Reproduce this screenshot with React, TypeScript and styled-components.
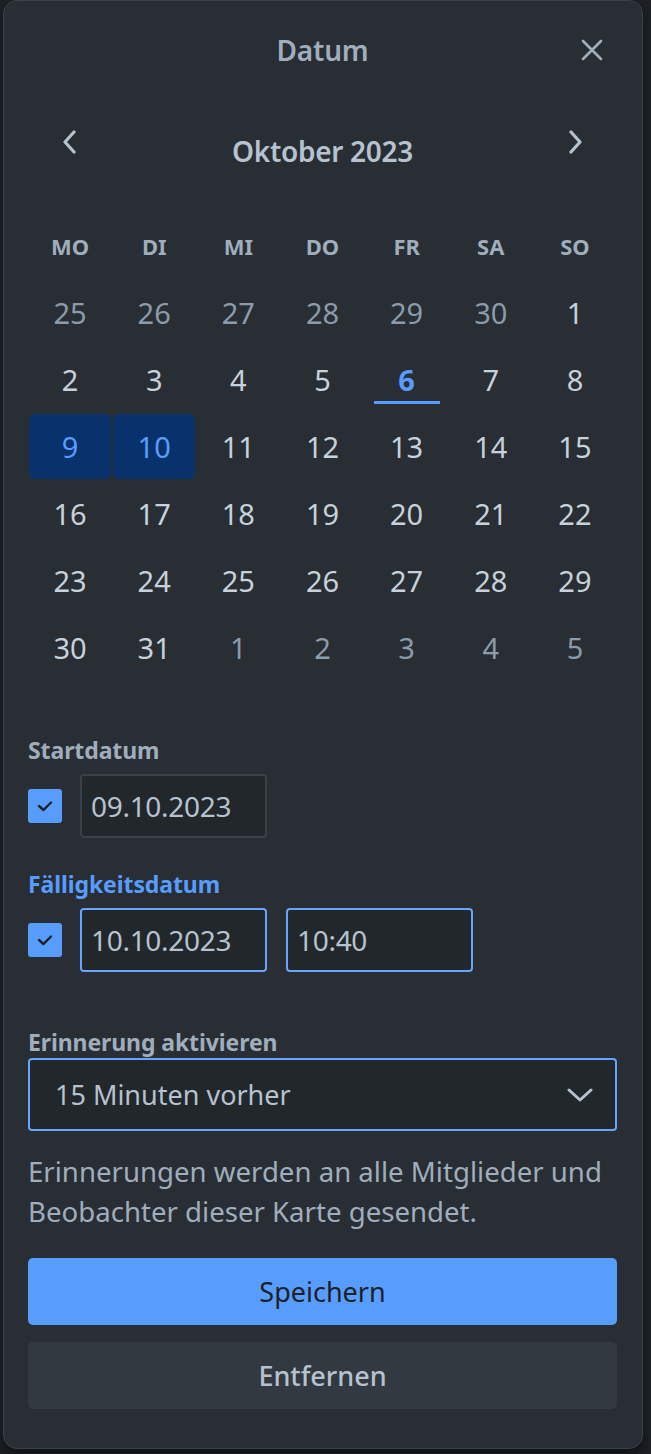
import React from "react";
import styled, { createGlobalStyle } from "styled-components";

const GlobalStyle = createGlobalStyle`
  html, body {
    margin: 0;
    padding: 0;
    background: #1d2125;
  }
  body {
    font-family: "Noto Sans", "Open Sans", sans-serif;
    color: #b6c2cf;
  }
  * { box-sizing: border-box; }
`;

const Page = styled.div`
  padding: 0 0 0 3px;
  min-height: 1454px;
`;

const Card = styled.section`
  width: 640px;
  background: #282e33;
  border: 1px solid #3a424a;
  border-radius: 14px;
  padding: 0 25px 39px 24px;
  box-shadow: 0 8px 14px rgba(0, 0, 0, 0.45);
  display: flex;
  flex-direction: column;
`;

const Header = styled.header`
  height: 98px;
  display: grid;
  grid-template-columns: 50px 1fr 50px;
  align-items: center;
`;

const Title = styled.h2`
  grid-column: 2;
  margin: 0;
  text-align: center;
  font-size: 28px;
  font-weight: 600;
  color: #9fadbc;
  letter-spacing: -0.2px;
`;

const IconButton = styled.button`
  width: 44px;
  height: 44px;
  padding: 0;
  border: 0;
  background: transparent;
  color: #9fadbc;
  display: flex;
  align-items: center;
  justify-content: center;
  justify-self: center;
  cursor: pointer;
`;

const MonthNav = styled.div`
  height: 86px;
  display: grid;
  grid-template-columns: 44px 1fr 44px;
  align-items: center;
  padding: 0 20px;
`;

const MonthTitle = styled.div`
  text-align: center;
  padding-top: 18px;
  font-size: 28px;
  font-weight: 600;
  color: #b6c2cf;
  letter-spacing: -0.3px;
`;

const NavButton = styled(IconButton)`
  color: #b6c2cf;
`;

const Grid = styled.div`
  margin-top: 28px;
  display: grid;
  grid-template-columns: repeat(7, 1fr);
  grid-auto-rows: 65px;
  row-gap: 2px;
  column-gap: 2px;
  padding: 0 1px;
`;

const Weekday = styled.div`
  display: flex;
  align-items: center;
  justify-content: center;
  font-size: 22px;
  font-weight: 700;
  color: #9fadbc;
`;

type DayKind = "outside" | "normal" | "selected" | "today";

const Day = styled.div<{ $kind: DayKind }>`
  display: flex;
  align-items: center;
  justify-content: center;
  border-radius: 6px;
  font-size: 29px;
  font-weight: ${(p) => (p.$kind === "today" ? 700 : 400)};
  color: ${(p) =>
    p.$kind === "outside"
      ? "#8c9bab"
      : p.$kind === "selected" || p.$kind === "today"
      ? "#579dff"
      : "#c7d1db"};
  background: ${(p) =>
    p.$kind === "selected"
      ? "#09326c"
      : p.$kind === "today"
      ? "linear-gradient(#579dff, #579dff) no-repeat center bottom 8px / calc(100% - 16px) 3px"
      : "transparent"};
`;

const Field = styled.div<{ $gap: number }>`
  margin-top: ${(p) => p.$gap}px;
  display: flex;
  flex-direction: column;
`;

const Label = styled.label<{ $active?: boolean }>`
  height: 32px;
  line-height: 32px;
  font-size: 23px;
  font-weight: 700;
  letter-spacing: -0.1px;
  color: ${(p) => (p.$active ? "#579dff" : "#9fadbc")};
`;

const FieldRow = styled.div`
  margin-top: 8px;
  display: flex;
  align-items: center;
  gap: 19px;
`;

const Check = styled.span`
  width: 34px;
  height: 34px;
  margin-right: -1px;
  border-radius: 3px;
  background: #579dff;
  display: flex;
  align-items: center;
  justify-content: center;
  flex: none;
`;

const TextInput = styled.input<{ $focused?: boolean }>`
  width: 187px;
  height: 64px;
  padding: 0 9px;
  border-radius: 4px;
  border: 2px solid ${(p) => (p.$focused ? "#66a5ff" : "#3a4249")};
  background: #22272b;
  color: #b6c2cf;
  font: inherit;
  font-size: 28px;
  letter-spacing: -0.3px;
  outline: none;
`;

const Select = styled.div`
  height: 73px;
  border: 2px solid #66a5ff;
  border-radius: 4px;
  background: #22272b;
  display: flex;
  align-items: center;
  justify-content: space-between;
  padding: 0 22px 0 25px;
  font-size: 27px;
  color: #b6c2cf;
`;

const Help = styled.p`
  margin: 20px 0 0;
  font-size: 27.6px;
  line-height: 40px;
  color: #9fadbc;
`;

const Button = styled.button<{ $primary?: boolean; $gap: number }>`
  margin-top: ${(p) => p.$gap}px;
  height: 67px;
  width: 100%;
  border: 0;
  border-radius: 5px;
  font: inherit;
  font-size: 27px;
  font-weight: ${(p) => (p.$primary ? 400 : 500)};
  background: ${(p) => (p.$primary ? "#579dff" : "#323940")};
  color: ${(p) => (p.$primary ? "#1d2125" : "#b6c2cf")};
  cursor: pointer;
`;

const CloseIcon = () => (
  <svg width="22" height="22" viewBox="0 0 22 22" fill="none">
    <path d="M2 2L20 20M20 2L2 20" stroke="currentColor" strokeWidth="2.6" strokeLinecap="round" />
  </svg>
);

const ChevronLeft = () => (
  <svg width="18" height="24" viewBox="0 0 18 24" fill="none">
    <path d="M13 2L4 12L13 22" stroke="currentColor" strokeWidth="3.2" strokeLinecap="round" strokeLinejoin="round" />
  </svg>
);

const ChevronRight = () => (
  <svg width="18" height="24" viewBox="0 0 18 24" fill="none">
    <path d="M5 2L14 12L5 22" stroke="currentColor" strokeWidth="3.2" strokeLinecap="round" strokeLinejoin="round" />
  </svg>
);

const ChevronDown = () => (
  <svg width="26" height="16" viewBox="0 0 26 16" fill="none">
    <path d="M2 3L13 13L24 3" stroke="#b6c2cf" strokeWidth="3" strokeLinecap="round" strokeLinejoin="round" />
  </svg>
);

const CheckMark = () => (
  <svg width="16" height="12" viewBox="0 0 16 12" fill="none">
    <path d="M2 6L6.5 10L14 2.5" stroke="#1d2125" strokeWidth="2.4" strokeLinecap="round" strokeLinejoin="round" />
  </svg>
);

const weekdays = ["MO", "DI", "MI", "DO", "FR", "SA", "SO"];

const days: { n: number; kind: DayKind }[] = [
  ...[25, 26, 27, 28, 29, 30].map((n) => ({ n, kind: "outside" as DayKind })),
  ...Array.from({ length: 31 }, (_, i) => {
    const n = i + 1;
    const kind: DayKind = n === 9 || n === 10 ? "selected" : n === 6 ? "today" : "normal";
    return { n, kind };
  }),
  ...[1, 2, 3, 4, 5].map((n) => ({ n, kind: "outside" as DayKind })),
];

export default function App() {
  return (
    <>
      <GlobalStyle />
      <Page>
        <Card>
          <Header>
            <Title>Datum</Title>
            <IconButton aria-label="Schließen">
              <CloseIcon />
            </IconButton>
          </Header>

          <MonthNav>
            <NavButton aria-label="Vorheriger Monat">
              <ChevronLeft />
            </NavButton>
            <MonthTitle>Oktober 2023</MonthTitle>
            <NavButton aria-label="Nächster Monat">
              <ChevronRight />
            </NavButton>
          </MonthNav>

          <Grid>
            {weekdays.map((w) => (
              <Weekday key={w}>{w}</Weekday>
            ))}
            {days.map((d, i) => (
              <Day key={i} $kind={d.kind}>
                {d.n}
              </Day>
            ))}
          </Grid>

          <Field $gap={54}>
            <Label>Startdatum</Label>
            <FieldRow>
              <Check>
                <CheckMark />
              </Check>
              <TextInput defaultValue="09.10.2023" readOnly />
            </FieldRow>
          </Field>

          <Field $gap={30}>
            <Label $active>Fälligkeitsdatum</Label>
            <FieldRow>
              <Check>
                <CheckMark />
              </Check>
              <TextInput $focused defaultValue="10.10.2023" readOnly />
              <TextInput $focused defaultValue="10:40" readOnly />
            </FieldRow>
          </Field>

          <Field $gap={54}>
            <Label>Erinnerung aktivieren</Label>
            <Select>
              <span>15 Minuten vorher</span>
              <ChevronDown />
            </Select>
          </Field>

          <Help>Erinnerungen werden an alle Mitglieder und Beobachter dieser Karte gesendet.</Help>

          <Button $primary $gap={27}>Speichern</Button>
          <Button $gap={17}>Entfernen</Button>
        </Card>
      </Page>
    </>
  );
}
